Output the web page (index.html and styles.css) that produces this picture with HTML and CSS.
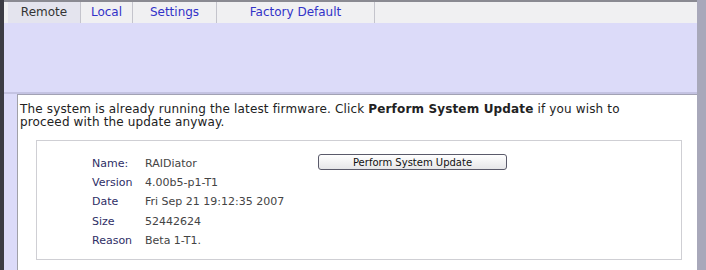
FILE: index.html
```html
<!DOCTYPE html>
<html lang="en">
<head>
    <meta charset="UTF-8">
    <title>System Update</title>
    <link rel="stylesheet" href="styles.css">
</head>
<body>
    <div class="window">
        <div class="tabs">
            <span class="tab active tab-remote">Remote</span>
            <a class="tab tab-local" href="#">Local</a>
            <a class="tab tab-settings" href="#">Settings</a>
            <a class="tab tab-factory" href="#">Factory Default</a>
        </div>
        <div class="band"></div>
        <div class="panel">
            <p class="message">The system is already running the latest firmware. Click <b>Perform System Update</b> if you wish to<br>proceed with the update anyway.</p>
            <div class="details">
                <div class="info">
                    <span class="label">Name:</span><span class="value">RAIDiator</span>
                    <span class="label">Version</span><span class="value">4.00b5-p1-T1</span>
                    <span class="label">Date</span><span class="value">Fri Sep 21 19:12:35 2007</span>
                    <span class="label">Size</span><span class="value">52442624</span>
                    <span class="label">Reason</span><span class="value">Beta 1-T1.</span>
                </div>
                <button type="button" class="update-btn">Perform System Update</button>
            </div>
        </div>
    </div>
</body>
</html>
```

FILE: styles.css
```css
body {
    margin: 0;
    padding: 0;
    background-color: #fff;
    font-family: "DejaVu Sans", Verdana, sans-serif;
}

.window {
    height: 270px;
    display: flex;
    flex-direction: column;
    border-left: 4px solid #3c3c44;
    border-right: 9px solid #a8a8ba;
    background-color: #dcdbf9;
    overflow: hidden;
}

.tabs {
    display: flex;
    height: 21px;
    border-top: 2px solid #8a8a92;
    background-color: #f0f0f2;
    padding-left: 4px;
    font-size: 12px;
    line-height: 20px;
}

.tab {
    text-align: center;
    border-right: 1px solid #c4c4cc;
    color: #3232c8;
    text-decoration: none;
}

.tab.active {
    color: #333;
    background-color: #e4e4ee;
}

.tab-remote { width: 72px; }
.tab-local { width: 51px; }
.tab-settings { width: 83px; }
.tab-factory { width: 157px; }

.band {
    height: 69px;
    border-bottom: 2px solid #c4c3e2;
}

.panel {
    flex: 1;
    margin-left: 13px;
    background-color: #fff;
    border-top: 1px solid #a2a2b4;
    border-left: 1px solid #a0a0a8;
    padding: 8px 15px 0 2px;
}

.message {
    margin: 0;
    font-size: 12px;
    line-height: 12.5px;
    letter-spacing: 0.15px;
    color: #222;
}

.details {
    display: flex;
    align-items: flex-start;
    margin: 12px 0 0 16px;
    height: 120px;
    border: 1px solid #cfcfd4;
    padding: 13px 0 0 55px;
    box-sizing: border-box;
}

.info {
    display: grid;
    grid-template-columns: 53px auto;
    width: 226px;
    font-size: 11px;
    line-height: 19.2px;
}

.label {
    color: #2e2e66;
}

.value {
    color: #444;
}

.update-btn {
    width: 189px;
    height: 16px;
    margin-top: 0;
    padding: 0;
    font-family: "DejaVu Sans", Verdana, sans-serif;
    font-size: 10px;
    color: #111;
    background: linear-gradient(#ffffff, #e6e6e8);
    border: 1px solid #5a5a6a;
    border-radius: 3px;
}
```
